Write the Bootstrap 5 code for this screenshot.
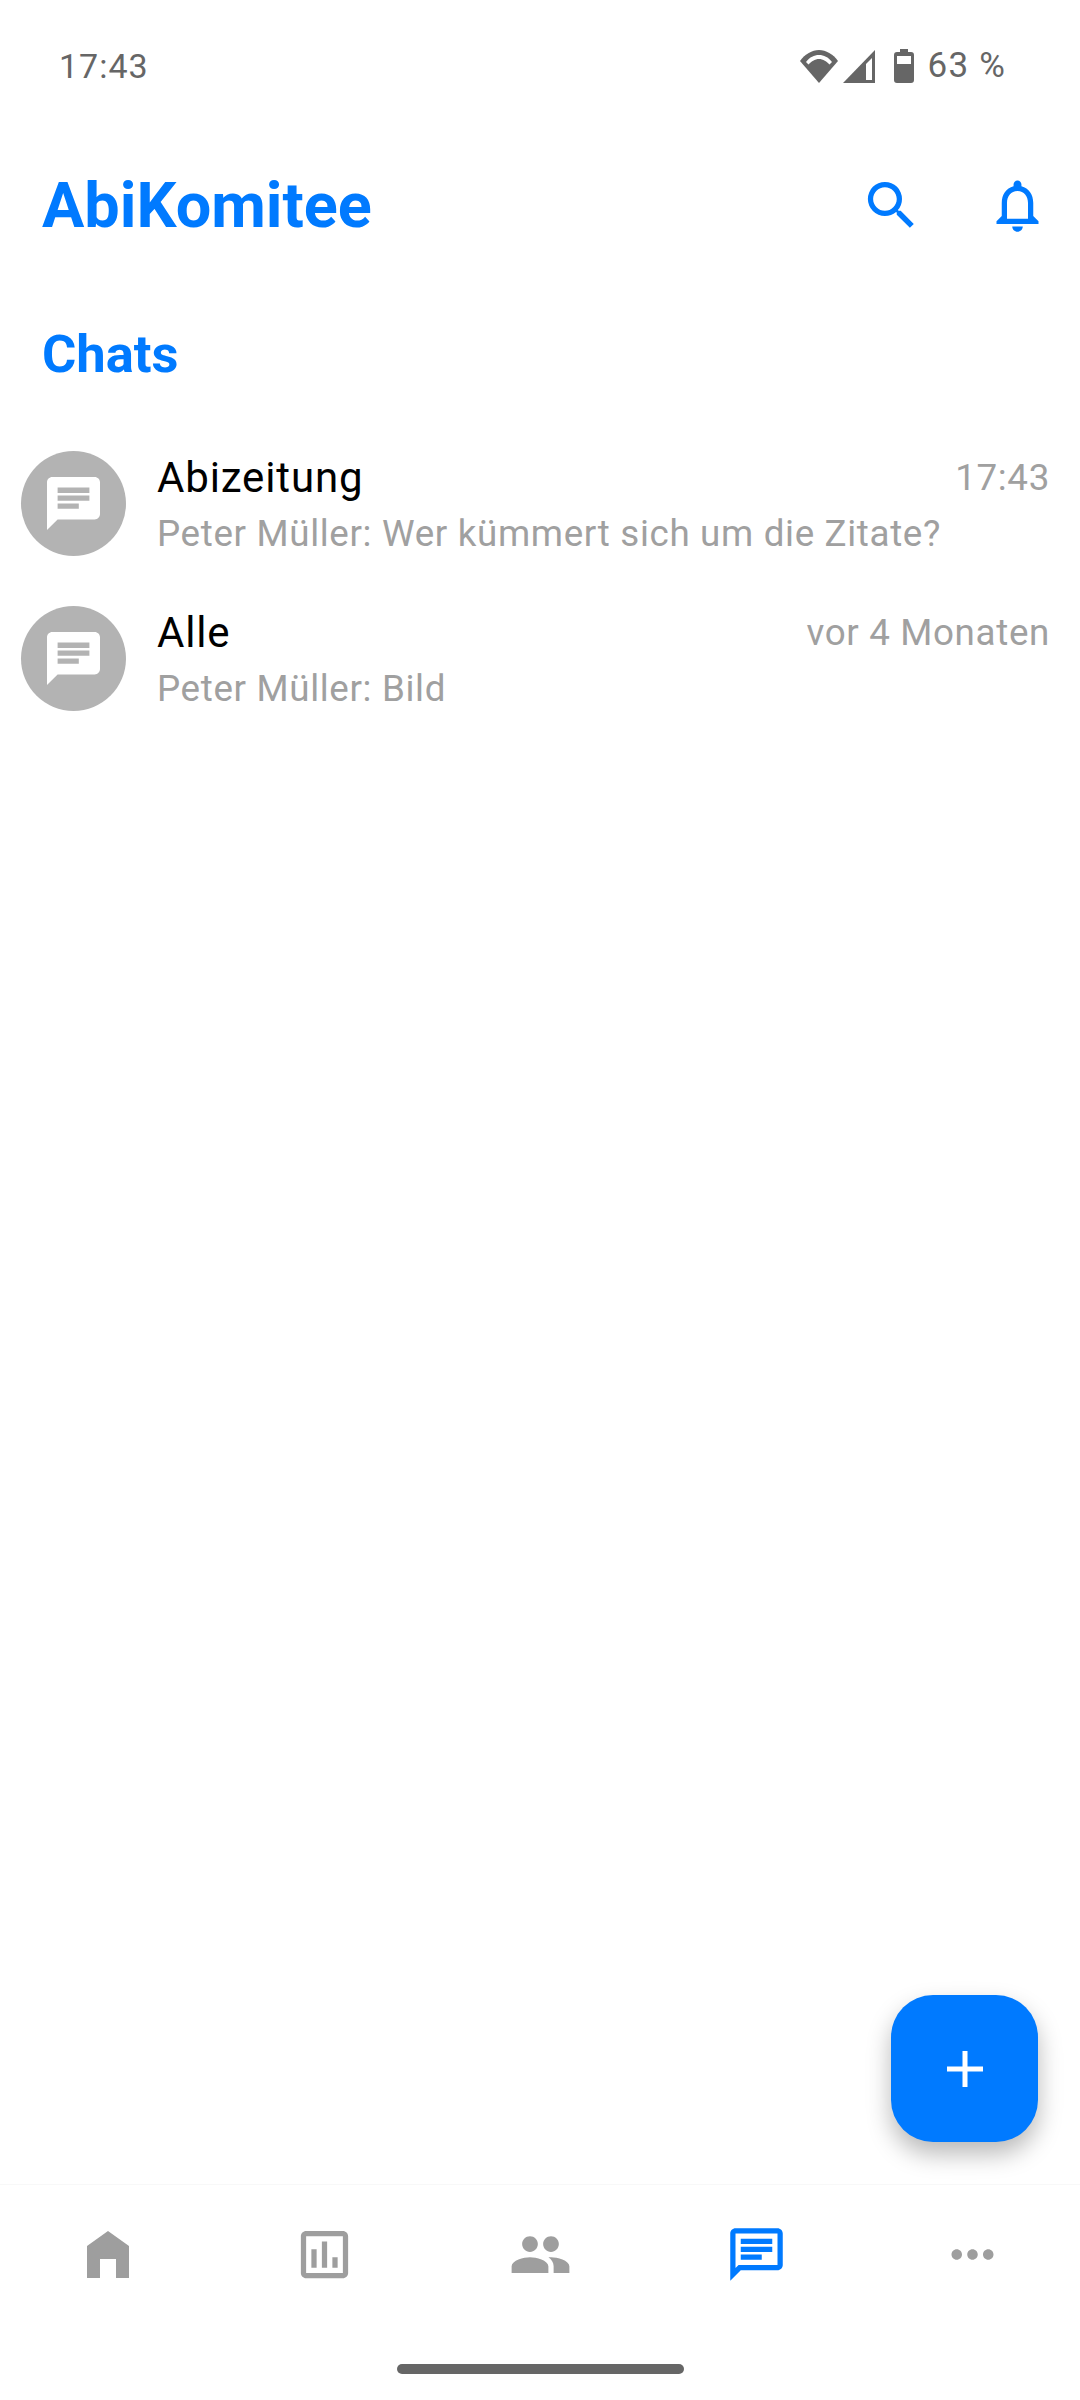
<!DOCTYPE html>
<html lang="de">
<head>
  <meta charset="UTF-8">
  <title>AbiKomitee</title>
  <link href="https://cdn.jsdelivr.net/npm/bootstrap@5.3.2/dist/css/bootstrap.min.css" rel="stylesheet">
  <style>
    body { background: #fff; font-family: Roboto, sans-serif; }
    .app-screen { width: 1080px; height: 2400px; }
    .status-bar { height: 130px; padding: 2px 74px 0 59px; color: #666; font-size: 34px; letter-spacing: 1px; }
    .status-icons { gap: 5px; }
    .status-pct { font-size: 35px; letter-spacing: 1.2px; }
    .batt-icon { margin: 0 9px 0 14px; }
    .top-bar { height: 151px; padding: 0 31px 0 42px; }
    .app-title { font-size: 63px; font-weight: 700; color: #007aff; margin: 0; }
    .top-icons { gap: 63px; }
    .section-title { font-size: 52.5px; font-weight: 700; color: #007aff; margin: 41px 0 0; padding: 0 42px; height: 64px; line-height: 64px; }
    .chat-list { padding-top: 40px; }
    .chat-row { height: 155px; padding: 0 30px 0 21px; gap: 31px; border: 0; background: transparent; }
    .chat-avatar { width: 105px; height: 105px; background: #b3b3b3; flex-shrink: 0; }
    .chat-text { padding-top: 5px; }
    .chat-name { font-size: 42px; color: #000; line-height: 56px; letter-spacing: .85px; }
    .chat-time, .chat-last { font-size: 36.75px; color: #a0a0a0; letter-spacing: .66px; line-height: 56px; }
    .fab-add { right: 42px; top: 1995px; width: 147px; height: 147px; border-radius: 42px; background: #007aff; box-shadow: 0 12px 24px rgba(0,0,0,.28); border: 0; }
    .bottom-nav { height: 216px; padding-top: 39px; border-top: 1px solid #f8f8f8; }
    .nav-slot { width: 216px; height: 60px; }
    .home-bar { width: 287px; height: 10px; background: #666; border-radius: 5px; margin-bottom: 26px; }
  </style>
</head>
<body>
<div class="app-screen d-flex flex-column position-relative overflow-hidden">
  <div class="status-bar d-flex justify-content-between align-items-center">
    <span>17:43</span>
    <div class="status-icons d-flex align-items-center">
      <svg width="38" height="33" viewBox="0 0 38 33"><path d="M19 33 0 11C5 4 12 0 19 0s14 4 19 11z" fill="#666"/><path d="M6 12c4-5 8-7 13-7s9 2 13 7l-2.500 2.500C27 11.500 23 9 19 9s-8 2.500-10.500 5.500z" fill="#fff"/></svg>
      <svg width="32" height="33" viewBox="0 0 32 33"><path d="M32 0v33H0z" fill="#666"/><path d="M23 14l6-6v22h-6z" fill="#fff"/></svg>
      <svg class="batt-icon" width="20" height="34" viewBox="0 0 20 34"><path d="M6 0h8v3h3q3 0 3 3v25q0 3-3 3H3q-3 0-3-3V6q0-3 3-3h3z" fill="#666"/><path d="M3 7h14v8H3z" fill="#fff"/></svg>
      <span class="status-pct">63 %</span>
    </div>
  </div>

  <div class="top-bar d-flex justify-content-between align-items-center">
    <h1 class="app-title">AbiKomitee</h1>
    <div class="top-icons d-flex align-items-center">
      <svg width="63" height="63" viewBox="0 0 24 24"><path fill="#007aff" d="M15.500 14h-.79l-.28-.27A6.470 6.470 0 0 0 16 9.500 6.500 6.500 0 1 0 9.500 16c1.610 0 3.090-.59 4.230-1.570l.27.28v.79l5 4.990L20.490 19zm-6 0C7.010 14 5 11.990 5 9.500S7.010 5 9.500 5 14 7.010 14 9.500 11.990 14 9.500 14z"/></svg>
      <svg width="63" height="63" viewBox="0 0 24 24"><path fill="#007aff" d="M12 22c1.100 0 2-.9 2-2h-4c0 1.100.9 2 2 2zm6-6v-5c0-3.070-1.630-5.640-4.500-6.320V4c0-.83-.67-1.500-1.500-1.500s-1.500.67-1.500 1.500v.68C7.640 5.360 6 7.920 6 11v5l-2 2v1h16v-1zm-2 1H8v-6c0-2.480 1.510-4.500 4-4.500s4 2.020 4 4.500z"/></svg>
    </div>
  </div>

  <h2 class="section-title">Chats</h2>

  <div class="chat-list list-group list-group-flush flex-grow-1">
    <div class="chat-row list-group-item d-flex align-items-center">
      <div class="chat-avatar rounded-circle d-flex align-items-center justify-content-center">
        <svg width="53" height="53" viewBox="2 2 20 20"><path fill="#fff" d="M20 2H4c-1.100 0-2 .9-2 2v18l4-4h14c1.100 0 2-.9 2-2V4c0-1.100-.9-2-2-2zM6 9h12v2H6zm8 5H6v-2h8zm4-6H6V6h12z"/></svg>
      </div>
      <div class="chat-text flex-grow-1">
        <div class="d-flex justify-content-between">
          <span class="chat-name">Abizeitung</span>
          <span class="chat-time">17:43</span>
        </div>
        <div class="chat-last">Peter Müller: Wer kümmert sich um die Zitate?</div>
      </div>
    </div>
    <div class="chat-row list-group-item d-flex align-items-center">
      <div class="chat-avatar rounded-circle d-flex align-items-center justify-content-center">
        <svg width="53" height="53" viewBox="2 2 20 20"><path fill="#fff" d="M20 2H4c-1.100 0-2 .9-2 2v18l4-4h14c1.100 0 2-.9 2-2V4c0-1.100-.9-2-2-2zM6 9h12v2H6zm8 5H6v-2h8zm4-6H6V6h12z"/></svg>
      </div>
      <div class="chat-text flex-grow-1">
        <div class="d-flex justify-content-between">
          <span class="chat-name">Alle</span>
          <span class="chat-time">vor 4 Monaten</span>
        </div>
        <div class="chat-last">Peter Müller: Bild</div>
      </div>
    </div>
  </div>

  <button class="fab-add btn position-absolute d-flex align-items-center justify-content-center p-0" type="button" aria-label="Neu">
    <svg width="36" height="36" viewBox="0 0 36 36"><path fill="#fff" d="M15.500 0h5v15.500H36v5H20.500V36h-5V20.500H0v-5h15.500z"/></svg>
  </button>

  <div class="bottom-nav d-flex flex-column align-items-center justify-content-between">
    <div class="d-flex">
      <div class="nav-slot d-flex align-items-center justify-content-center">
        <svg width="42" height="47" viewBox="0 0 42 47"><path fill="#9e9e9e" d="M21 0 42 15V47H29V28H13V47H0V15z"/></svg>
      </div>
      <div class="nav-slot d-flex align-items-center justify-content-center">
        <svg width="63" height="63" viewBox="0 0 24 24"><path fill="#9e9e9e" d="M19 3H5c-1.100 0-2 .9-2 2v14c0 1.100.9 2 2 2h14c1.100 0 2-.9 2-2V5c0-1.100-.9-2-2-2zm0 16H5V5h14zM7 10h2v7H7zm4-3h2v10h-2zm4 6h2v4h-2z"/></svg>
      </div>
      <div class="nav-slot d-flex align-items-center justify-content-center">
        <svg width="63" height="63" viewBox="0 0 24 24"><path fill="#9e9e9e" d="M16 11c1.660 0 2.990-1.340 2.990-3S17.660 5 16 5s-3 1.340-3 3 1.340 3 3 3zm-8 0c1.660 0 2.990-1.340 2.990-3S9.660 5 8 5 5 6.340 5 8s1.340 3 3 3zm0 2c-2.330 0-7 1.170-7 3.500V19h14v-2.500c0-2.330-4.670-3.500-7-3.500zm8 0c-.29 0-.62.020-.97.050 1.160.84 1.970 1.970 1.970 3.450V19h6v-2.500c0-2.330-4.670-3.500-7-3.500z"/></svg>
      </div>
      <div class="nav-slot d-flex align-items-center justify-content-center">
        <svg width="63" height="63" viewBox="0 0 24 24"><path fill="#007aff" d="M20 2H4c-1.100 0-2 .9-2 2v18l4-4h14c1.100 0 2-.9 2-2V4c0-1.100-.9-2-2-2zm0 14H5.170L4 17.170V4h16zM6 12h8v2H6zm0-3h12v2H6zm0-3h12v2H6z"/></svg>
      </div>
      <div class="nav-slot d-flex align-items-center justify-content-center">
        <svg width="63" height="63" viewBox="0 0 24 24"><path fill="#9e9e9e" d="M6 10c-1.100 0-2 .9-2 2s.9 2 2 2 2-.9 2-2-.9-2-2-2zm12 0c-1.100 0-2 .9-2 2s.9 2 2 2 2-.9 2-2-.9-2-2-2zm-6 0c-1.100 0-2 .9-2 2s.9 2 2 2 2-.9 2-2-.9-2-2-2z"/></svg>
      </div>
    </div>
    <div class="home-bar"></div>
  </div>
</div>
<script src="https://cdn.jsdelivr.net/npm/bootstrap@5.3.2/dist/js/bootstrap.bundle.min.js"></script>
</body>
</html>
